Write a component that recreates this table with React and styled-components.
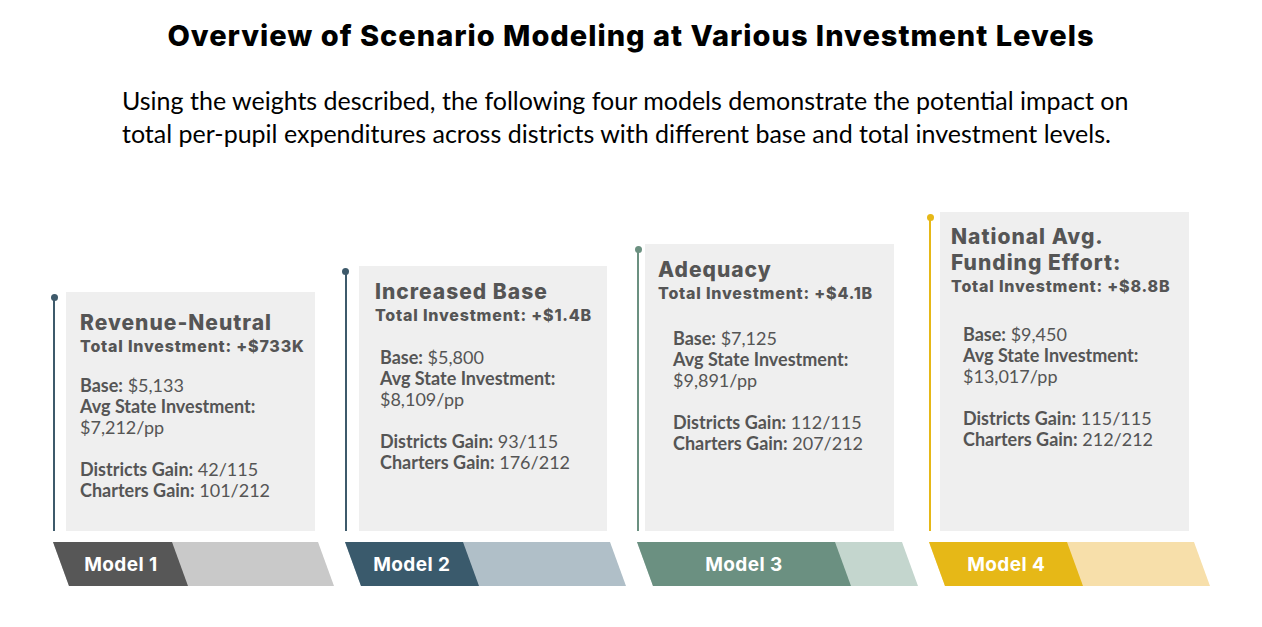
import React from "react";
import styled, { createGlobalStyle } from "styled-components";

const GlobalStyle = createGlobalStyle`
  html, body {
    margin: 0;
    padding: 0;
    background: #ffffff;
  }
  body {
    font-family: "Lato", "Liberation Sans", sans-serif;
  }
`;

const models = [
  {
    id: 1,
    title: ["Revenue-Neutral"],
    total: "+$733K",
    base: "$5,133",
    avg: "$7,212/pp",
    districts: "42/115",
    charters: "101/212",
    height: 239,
    padTop: 18,
    padLeft: 14,
    inset: 8,
    indent: 0,
    bodyGap: 19,
    rail: "#3e5a6b",
    dark: "#575757",
    light: "#c9c9c9",
    darkWidth: 119,
  },
  {
    id: 2,
    title: ["Increased Base"],
    total: "+$1.4B",
    base: "$5,800",
    avg: "$8,109/pp",
    districts: "93/115",
    charters: "176/212",
    height: 265,
    padTop: 13,
    padLeft: 16,
    inset: 9,
    indent: 5,
    bodyGap: 22,
    rail: "#3e5a6b",
    dark: "#3a5a6c",
    light: "#b0bfc8",
    darkWidth: 118,
  },
  {
    id: 3,
    title: ["Adequacy"],
    total: "+$4.1B",
    base: "$7,125",
    avg: "$9,891/pp",
    districts: "112/115",
    charters: "207/212",
    height: 287,
    padTop: 13,
    padLeft: 13,
    inset: 3,
    indent: 15,
    bodyGap: 25,
    rail: "#6b9080",
    dark: "#6b9081",
    light: "#c4d6ce",
    darkWidth: 198,
  },
  {
    id: 4,
    title: ["National Avg.", "Funding Effort:"],
    total: "+$8.8B",
    base: "$9,450",
    avg: "$13,017/pp",
    districts: "115/115",
    charters: "212/212",
    height: 319,
    padTop: 12,
    padLeft: 11,
    inset: 6,
    indent: 12,
    bodyGap: 28,
    rail: "#e6b817",
    dark: "#e6b817",
    light: "#f7dfaa",
    darkWidth: 138,
  },
];

const Page = styled.div`
  width: 1262px;
  padding-top: 18px;
`;

const Heading = styled.h1`
  margin: 0;
  text-align: center;
  font-family: "Inter", "DejaVu Sans", sans-serif;
  font-weight: 800;
  font-size: 29px;
  line-height: 36px;
  letter-spacing: 1px;
  color: #000;
`;

const Intro = styled.p`
  margin: 30px 0 0 122px;
  width: 1030px;
  font-family: "Lato", "Liberation Sans", sans-serif;
  font-size: 25px;
  line-height: 33px;
  color: #000;
`;

const Grid = styled.div`
  display: grid;
  grid-template-columns: repeat(4, 265px);
  column-gap: 27px;
  align-items: end;
  margin-top: 62px;
  padding-left: 50px;
`;

const Column = styled.div`
  display: flex;
  flex-direction: column;
`;

const Panel = styled.div`
  display: flex;
  height: ${(p) => p.$height}px;
`;

const Rail = styled.div`
  width: 8px;
  display: flex;
  flex-direction: column;
  align-items: center;
  padding-top: 2px;
`;

const Dot = styled.span`
  width: 7px;
  height: 7px;
  border-radius: 50%;
  background: ${(p) => p.$color};
`;

const Line = styled.span`
  flex: 1;
  width: 2px;
  margin-top: -3px;
  background: ${(p) => p.$color};
`;

const Card = styled.div`
  width: 249px;
  box-sizing: border-box;
  margin-left: ${(p) => p.$inset}px;
  background: #efefef;
  padding: ${(p) => p.$padTop}px 6px 0 ${(p) => p.$padLeft}px;
  color: #555555;
`;

const CardTitle = styled.div`
  font-family: "Inter", "DejaVu Sans", sans-serif;
  font-weight: 800;
  font-size: 21px;
  line-height: 26px;
  letter-spacing: 1px;
`;

const Total = styled.div`
  font-family: "Inter", "DejaVu Sans", sans-serif;
  font-weight: 800;
  font-size: 16px;
  line-height: 20px;
  letter-spacing: 0.8px;
  white-space: nowrap;
`;

const Body = styled.div`
  margin-top: ${(p) => p.$gap}px;
  padding-left: ${(p) => p.$indent}px;
  font-family: "Lato", "Liberation Sans", sans-serif;
  font-size: 18px;
  line-height: 21px;
`;

const Row = styled.div`
  margin-top: ${(p) => (p.$spaced ? 21 : 0)}px;
`;

const Label = styled.span`
  font-weight: 700;
`;

const Banner = styled.div`
  display: flex;
  width: 265px;
  height: 44px;
  margin: 11px 0 0 3px;
  transform: skewX(20deg);
  transform-origin: top left;
  background: ${(p) => p.$light};
`;

const BannerDark = styled.div`
  width: ${(p) => p.$width}px;
  display: flex;
  align-items: center;
  justify-content: center;
  background: ${(p) => p.$dark};
`;

const BannerText = styled.span`
  transform: skewX(-20deg);
  font-family: "Inter", "DejaVu Sans", sans-serif;
  font-weight: 700;
  font-size: 19px;
  letter-spacing: 0.4px;
  color: #ffffff;
`;

const ModelColumn = ({ m }) => (
  <Column>
    <Panel $height={m.height}>
      <Rail>
        <Dot $color={m.rail} />
        <Line $color={m.rail} />
      </Rail>
      <Card $padTop={m.padTop} $padLeft={m.padLeft} $inset={m.inset}>
        <CardTitle>
          {m.title.map((t) => (
            <div key={t}>{t}</div>
          ))}
        </CardTitle>
        <Total>Total Investment: {m.total}</Total>
        <Body $gap={m.bodyGap} $indent={m.indent}>
          <Row>
            <Label>Base:</Label> {m.base}
          </Row>
          <Row>
            <Label>Avg State Investment:</Label>
          </Row>
          <Row>{m.avg}</Row>
          <Row $spaced>
            <Label>Districts Gain:</Label> {m.districts}
          </Row>
          <Row>
            <Label>Charters Gain:</Label> {m.charters}
          </Row>
        </Body>
      </Card>
    </Panel>
    <Banner $light={m.light}>
      <BannerDark $dark={m.dark} $width={m.darkWidth}>
        <BannerText>Model {m.id}</BannerText>
      </BannerDark>
    </Banner>
  </Column>
);

export default function App() {
  return (
    <>
      <GlobalStyle />
      <Page>
        <Heading>Overview of Scenario Modeling at Various Investment Levels</Heading>
        <Intro>
          Using the weights described, the following four models demonstrate the
          potential impact on total per-pupil expenditures across districts with
          different base and total investment levels.
        </Intro>
        <Grid>
          {models.map((m) => (
            <ModelColumn key={m.id} m={m} />
          ))}
        </Grid>
      </Page>
    </>
  );
}
